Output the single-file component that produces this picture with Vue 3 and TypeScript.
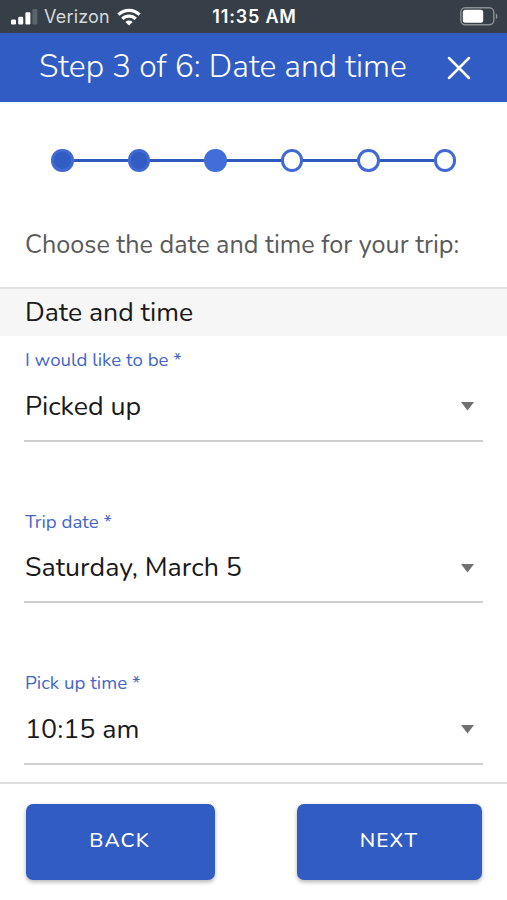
<script setup lang="ts">
import { ref } from 'vue'

interface Field {
  id: string
  label: string
  value: string
}

const currentStep = ref<number>(3)
const totalSteps = 6

const fields: Field[] = [
  { id: 'mode', label: 'I would like to be *', value: 'Picked up' },
  { id: 'date', label: 'Trip date *', value: 'Saturday, March 5' },
  { id: 'time', label: 'Pick up time *', value: '10:15 am' },
]
</script>

<template>
  <div class="screen">
    <div class="status">
      <div class="carrier">
        <svg class="signal" width="27" height="16" viewBox="0 0 27 16">
          <rect x="0" y="10.5" width="5" height="5" rx="1.2" fill="#fff" />
          <rect x="7.2" y="7.8" width="5" height="7.7" rx="1.2" fill="#fff" />
          <rect x="14.4" y="3.3" width="5" height="12.2" rx="1.2" fill="#fff" />
          <rect x="21.4" y="0" width="5" height="15.5" rx="1.2" fill="#5b646b" />
        </svg>
        <span class="carrier-name">Verizon</span>
        <svg class="wifi" width="24" height="18" viewBox="0 0 24 18">
          <g fill="none" stroke="#fff" stroke-width="3.2">
            <path d="M1.4 6.7a15 15 0 0 1 21.2 0" />
            <path d="M5.3 10.9a9.5 9.5 0 0 1 13.4 0" />
          </g>
          <path d="M12 17.6l-3.6-3.7a5.1 5.1 0 0 1 7.2 0z" fill="#fff" />
        </svg>
      </div>
      <span class="clock">11:35 AM</span>
      <svg class="battery" width="38" height="19" viewBox="0 0 38 19">
        <rect x="0.8" y="0.8" width="33" height="17" rx="4.5" fill="none" stroke="#8a9196" stroke-width="1.4" />
        <rect x="2.8" y="2.8" width="20.4" height="13" rx="2.5" fill="#fff" />
        <path d="M35.8 6.3c2.2 1 2.2 5 0 6z" fill="#8a9196" />
      </svg>
    </div>

    <header class="header">
      <h1 class="title">Step 3 of 6: Date and time</h1>
      <button class="close" aria-label="Close">
        <svg width="24" height="24" viewBox="0 0 24 24">
          <path d="M2 2l20 20M22 2L2 22" stroke="#fff" stroke-width="2.5" stroke-linecap="round" />
        </svg>
      </button>
    </header>

    <div class="stepper">
      <template v-for="n in totalSteps" :key="n">
        <span v-if="n > 1" class="line"></span>
        <span class="dot" :class="{ done: n < currentStep, current: n === currentStep }"></span>
      </template>
    </div>

    <p class="intro">Choose the date and time for your trip:</p>

    <h2 class="section">Date and time</h2>

    <main class="fields">
      <div v-for="field in fields" :key="field.id" class="field">
        <div class="label">{{ field.label }}</div>
        <div class="select">
          <span class="value">{{ field.value }}</span>
          <svg class="caret" width="13" height="9" viewBox="0 0 13 9"><path d="M0 0h13L6.5 8.6z" fill="#707070" /></svg>
        </div>
      </div>
    </main>

    <footer class="footer">
      <button class="btn back">BACK</button>
      <button class="btn next">NEXT</button>
    </footer>
  </div>
</template>

<style>
body {
  margin: 0;
  background: #fff;
}
</style>

<style scoped>
.screen {
  width: 507px;
  height: 900px;
  display: flex;
  flex-direction: column;
  overflow: hidden;
  background: #fff;
  color: #1a1a1a;
  font-family: "Nunito", "Noto Sans", sans-serif;
}
.screen * {
  box-sizing: border-box;
}
.status {
  flex: none;
  height: 33px;
  padding: 0 9px 1px 11px;
  display: grid;
  grid-template-columns: 1fr auto 1fr;
  align-items: center;
  background: #363f47;
  color: #fff;
  font-family: Inter, sans-serif;
}
.carrier {
  display: flex;
  align-items: center;
}
.carrier-name {
  margin-left: 6px;
  width: 67px;
  font-size: 18px;
  letter-spacing: 0.2px;
  line-height: 32px;
  color: #d6d9db;
  padding-top: 1px;
}
.wifi {
  margin-left: 6px;
}
.clock {
  font-size: 18px;
  font-weight: 600;
  letter-spacing: 0.8px;
  line-height: 32px;
  padding-top: 1px;
}
.battery {
  justify-self: end;
}
.header {
  flex: none;
  height: 69px;
  padding: 0 36px 0 39px;
  display: flex;
  align-items: center;
  justify-content: space-between;
  background: #305cc3;
  color: #fff;
}
.title {
  margin: 0;
  padding-bottom: 1px;
  font-size: 31.9px;
  font-weight: 350;
  line-height: 66px;
  white-space: nowrap;
}
.close {
  width: 24px;
  height: 24px;
  padding: 0;
  border: 0;
  background: none;
}
.close svg {
  display: block;
}
.stepper {
  flex: none;
  height: 117px;
  padding: 0 50.7px 0 51.1px;
  display: flex;
  align-items: center;
}
.dot {
  width: 22.5px;
  height: 22.5px;
  border: 3px solid #4169d2;
  border-radius: 50%;
  background: #fff;
}
.dot.done {
  background: #305cc3;
}
.dot.current {
  background: #416fd9;
  border-color: #416fd9;
}
.line {
  flex: 1;
  height: 3px;
  background: #2f59bd;
}
.intro {
  flex: none;
  height: 68px;
  margin: 0;
  padding-left: 25px;
  font-size: 25.2px;
  line-height: 53px;
  color: #5a5a5a;
  white-space: nowrap;
}
.section {
  flex: none;
  height: 49px;
  margin: 0;
  padding-left: 25px;
  border-top: 2px solid #e1e1e1;
  background: #f6f6f6;
  font-size: 26.6px;
  font-weight: 400;
  line-height: 47px;
}
.fields {
  flex: none;
  height: 446px;
  padding: 0 24px;
  display: flex;
  flex-direction: column;
  gap: 56px;
}
.field {
  height: 105.5px;
}
.label {
  height: 48px;
  padding-left: 1px;
  font-size: 18.7px;
  line-height: 48px;
  color: #4467c4;
}
.select {
  height: 57.5px;
  padding: 0 9px 0 1px;
  display: flex;
  align-items: center;
  justify-content: space-between;
  border-bottom: 2px solid #cfcfcf;
}
.value {
  font-size: 26.8px;
  line-height: 44px;
  padding-bottom: 12px;
}
.caret {
  margin-bottom: 10px;
}
.footer {
  flex: none;
  height: 118px;
  padding: 19.5px 25px 0 26px;
  display: flex;
  justify-content: space-between;
  align-items: flex-start;
  border-top: 2px solid #dedede;
  background: #fff;
}
.btn {
  height: 76px;
  padding: 0 1px 3px 0;
  border: 0;
  border-radius: 7px;
  background: #305cc3;
  box-shadow: 0 2px 4px rgba(0, 0, 0, 0.3);
  color: #fff;
  font-family: inherit;
  font-size: 20.8px;
  font-weight: 550;
  letter-spacing: 1.2px;
}
.back {
  width: 188.5px;
}
.next {
  width: 185px;
}
</style>
